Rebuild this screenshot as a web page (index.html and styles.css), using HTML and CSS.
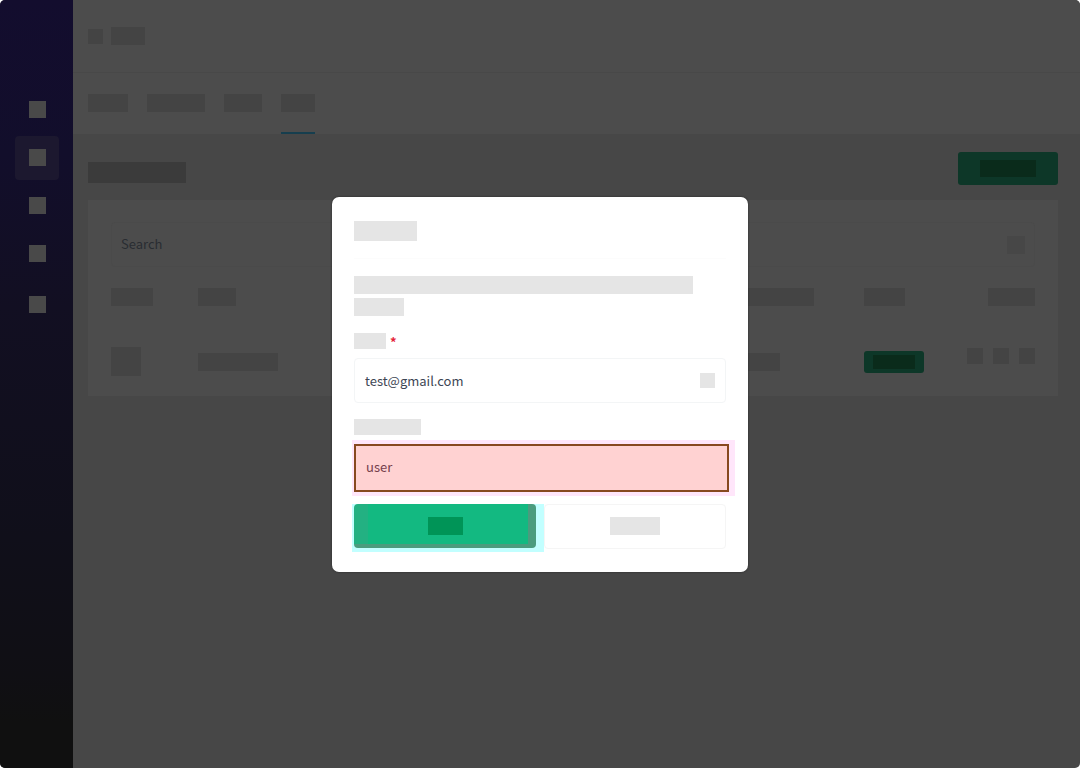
FILE: index.html
```html
<!DOCTYPE html>
<html lang="en">
<head>
<meta charset="utf-8">
<meta name="viewport" content="width=device-width, initial-scale=1">
<title>Users</title>
<link rel="stylesheet" href="styles.css">
</head>
<body>
<div class="app">
  <nav class="sidebar" aria-label="Main">
    <button class="nav-item" type="button" aria-label="Home"><span class="nav-icon"></span></button>
    <button class="nav-item active" type="button" aria-label="Users"><span class="nav-icon"></span></button>
    <button class="nav-item" type="button" aria-label="Items"><span class="nav-icon"></span></button>
    <button class="nav-item" type="button" aria-label="Reports"><span class="nav-icon"></span></button>
    <button class="nav-item last" type="button" aria-label="Settings"><span class="nav-icon"></span></button>
  </nav>
  <main class="main">
    <header class="topbar">
      <span class="bone w15 h15"></span>
      <span class="bone w34 h18"></span>
    </header>
    <div class="tabs">
      <button class="tab" type="button" aria-label="Tab 1"><span class="bone w40 h18"></span></button>
      <button class="tab" type="button" aria-label="Tab 2"><span class="bone w58 h18"></span></button>
      <button class="tab" type="button" aria-label="Tab 3"><span class="bone w38 h18"></span></button>
      <button class="tab selected" type="button" aria-label="Tab 4"><span class="bone w34 h18"></span></button>
    </div>
    <section class="content">
      <div class="heading">
        <span class="bone page-title"></span>
        <button class="add" type="button" aria-label="Add"><span class="add-label"></span></button>
      </div>
      <div class="panel">
        <div class="search">
          <input class="search-input" type="text" placeholder="Search" aria-label="Search">
          <span class="bone soft w18 h18"></span>
        </div>
        <table class="users">
          <thead>
            <tr>
              <th class="col-avatar"><span class="bone w42 h18"></span></th>
              <th class="col-name"><span class="bone w38 h18"></span></th>
              <th class="col-role"><span class="bone w94 h18"></span></th>
              <th class="col-status"><span class="bone w41 h18"></span></th>
              <th class="col-actions"><span class="bone w47 h18"></span></th>
            </tr>
          </thead>
          <tbody>
            <tr>
              <td><span class="bone w30 h29"></span></td>
              <td><span class="bone w80 h18"></span></td>
              <td><span class="bone w60 h18"></span></td>
              <td><span class="badge"><span class="badge-label"></span></span></td>
              <td>
                <div class="actions">
                  <button class="bone action" type="button" aria-label="View"></button>
                  <button class="bone action" type="button" aria-label="Edit"></button>
                  <button class="bone action" type="button" aria-label="Delete"></button>
                </div>
              </td>
            </tr>
          </tbody>
        </table>
      </div>
    </section>
  </main>
  <div class="overlay">
    <form class="modal" role="dialog" aria-label="Invite">
      <div class="modal-head"><span class="block title"></span></div>
      <div class="message">
        <span class="block line-long"></span>
        <span class="block line-short"></span>
      </div>
      <label class="label" for="email"><span class="block label-email"></span><span class="star">*</span></label>
      <div class="field">
        <input class="input" id="email" type="text" value="test@gmail.com">
        <span class="block field-icon"></span>
      </div>
      <label class="label" for="role"><span class="block label-role"></span></label>
      <div class="marked">
        <input class="input marked-input" id="role" type="text" value="user">
      </div>
      <div class="buttons">
        <div class="submit-wrap">
          <button class="submit" type="button" aria-label="Submit"><span class="submit-label"></span></button>
        </div>
        <button class="cancel" type="button" aria-label="Cancel"><span class="block cancel-label"></span></button>
      </div>
    </form>
  </div>
</div>
</body>
</html>
```

FILE: styles.css
```css
* { box-sizing: border-box; }

body {
  margin: 0;
  background: #fff;
  font-family: "Noto Sans CJK SC", "Noto Sans", sans-serif;
  font-size: 13px;
}

button, input {
  margin: 0;
  padding: 0;
  border: 0;
  background: none;
  font: inherit;
}

.app {
  position: relative;
  display: flex;
  min-height: 100vh;
  border-radius: 5px;
  overflow: hidden;
  background: #474747;
}

/* Sidebar */
.sidebar {
  flex: none;
  display: flex;
  flex-direction: column;
  align-items: center;
  gap: 4px;
  width: 73px;
  padding-top: 88px;
  background: linear-gradient(#130d2e 0%, #120e2b 20%, #120f22 40%, #100f1a 70%, #100f14 88%, #101010 94%);
}
.nav-item {
  display: flex;
  align-items: center;
  justify-content: center;
  width: 44px;
  height: 44px;
  padding: 0 0 1px 1px;
  border-radius: 4px;
}
.nav-item.active { background: #1c182f; }
.nav-item.last { margin-top: 3px; }
.nav-icon { width: 17px; height: 17px; background: #494949; }

/* Placeholder bars */
.bone { display: block; background: #444; }
.bone.soft { background: #474747; }
.w15 { width: 15px; }
.w18 { width: 18px; }
.w30 { width: 30px; }
.w34 { width: 34px; }
.w38 { width: 38px; }
.w40 { width: 40px; }
.w41 { width: 41px; }
.w42 { width: 42px; }
.w47 { width: 47px; }
.w58 { width: 58px; }
.w60 { width: 60px; }
.w80 { width: 80px; }
.w94 { width: 94px; }
.h15 { height: 15px; }
.h18 { height: 18px; }
.h29 { height: 29px; }

/* Page */
.main { flex: 1; min-width: 0; }
.topbar {
  display: flex;
  align-items: center;
  gap: 8px;
  height: 73px;
  padding: 0 15px;
  background: #4c4c4c;
  border-bottom: 1px solid #484848;
}
.tabs {
  display: flex;
  gap: 19px;
  height: 61px;
  padding: 0 15px;
  background: #4c4c4c;
}
.tab { padding: 0 0 2px; }
.tab.selected { padding: 0; border-bottom: 2px solid #163e4e; }
.content { padding: 18px 22px 0 15px; }
.heading {
  display: flex;
  align-items: center;
  justify-content: space-between;
}
.page-title { width: 98px; height: 21px; margin-top: 7px; background: #3b3b3b; }
.add {
  display: flex;
  align-items: center;
  justify-content: center;
  width: 100px;
  height: 33px;
  border-radius: 3px;
  background: #0d3728;
}
.add-label { width: 56px; height: 17px; background: #0a2b1b; }
.panel {
  height: 196px;
  margin-top: 15px;
  padding: 22px 23px 0;
  background: #4c4c4c;
}
.search {
  display: flex;
  align-items: center;
  height: 45px;
  padding: 0 9px;
  border: 1px solid #4a4a4a;
  border-radius: 4px;
}
.search-input { flex: 1; min-width: 0; padding-bottom: 2px; color: #292d32; }
.search-input::placeholder { color: #292d32; opacity: 1; }

.users { width: 100%; table-layout: fixed; border-collapse: collapse; }
.users th { height: 60px; padding: 0; }
.users td { height: 69px; padding: 0; }
.col-avatar { width: 9.4%; }
.col-name { width: 56.5%; }
.col-role { width: 15.6%; }
.col-status { width: 9.2%; }
.col-actions .bone { margin-left: auto; }
.badge {
  display: flex;
  align-items: center;
  justify-content: center;
  width: 60px;
  height: 22px;
  border-radius: 3px;
  background: #0d3728;
}
.badge-label { width: 42px; height: 14px; background: #0a2b1b; }
.actions {
  display: flex;
  justify-content: flex-end;
  gap: 10px;
  padding-bottom: 12px;
}
.action { width: 16px; height: 16px; }

/* Dialog */
.overlay {
  position: absolute;
  inset: 0;
  display: flex;
  align-items: center;
  justify-content: center;
}
.modal {
  width: 416px;
  max-width: 100%;
  padding: 24px 22px 20px;
  border-radius: 7px;
  background: #fff;
  box-shadow: 0 0 2px #222;
}
.block { display: block; background: #e5e5e5; }
.modal-head { height: 38px; border-bottom: 1px solid #fcfcfc; }
.title { width: 63px; height: 20px; }
.message {
  display: flex;
  flex-direction: column;
  gap: 4px;
  margin: 17px 0;
}
.line-long { width: 339px; height: 18px; }
.line-short { width: 50px; height: 18px; }
.label { display: flex; gap: 4px; height: 16px; }
.label-email { width: 32px; height: 16px; }
.label-role { width: 67px; height: 16px; }
.star { color: #e52438; font-weight: 700; line-height: 17px; }
.field {
  display: flex;
  align-items: center;
  height: 45px;
  margin: 9px 0 16px;
  padding: 0 10px;
  border: 1px solid #f3f5f6;
  border-radius: 4px;
}
.input { flex: 1; min-width: 0; color: #3d4654; outline: none; }
.field-icon { width: 15px; height: 15px; }
.marked {
  display: flex;
  margin: 5px -9px 8px -2px;
  padding: 4px 6px 4px 2px;
  background: #ffe6fa;
}
.marked-input {
  height: 48px;
  padding: 0 10px 2px;
  border: 2px solid #87491f;
  background: #ffd2d2;
  color: #75404c;
}
.buttons { display: flex; align-items: flex-start; }
.submit-wrap {
  flex: 1;
  margin-left: -2px;
  padding: 0 8px 4px 2px;
  background: #c2ffff;
}
.submit {
  display: flex;
  align-items: center;
  justify-content: center;
  width: 100%;
  height: 44px;
  border-radius: 4px;
  background:
    linear-gradient(#4b9c7e, #4b9c7e) right / 8px 100% no-repeat,
    linear-gradient(#4b9c7e, #4b9c7e) bottom / 100% 4px no-repeat,
    linear-gradient(#23b182, #23b182) left / 14px 100% no-repeat,
    #13b981;
}
.submit-label { width: 35px; height: 18px; background: #009457; }
.cancel {
  flex: none;
  display: flex;
  align-items: center;
  justify-content: center;
  width: 182px;
  height: 45px;
  border: 1px solid #f5f5f5;
  border-radius: 4px;
}
.cancel-label { width: 50px; height: 18px; }
```
